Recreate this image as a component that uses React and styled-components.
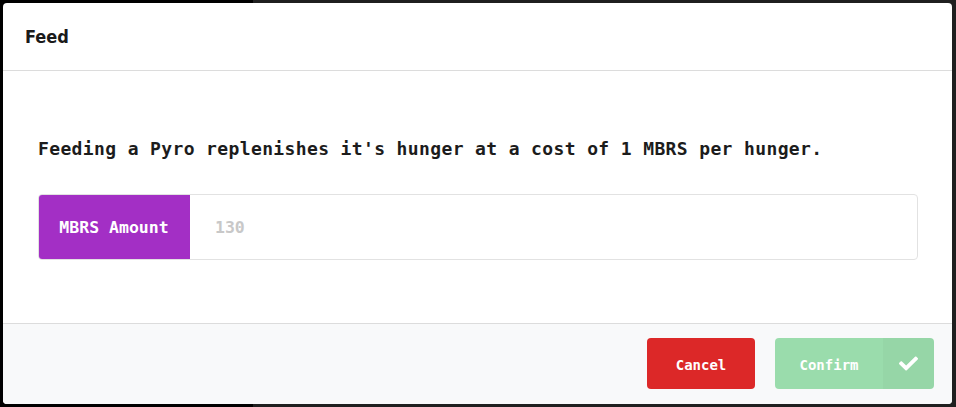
import React from "react";
import styled, { createGlobalStyle } from "styled-components";
import { FaCheck } from "react-icons/fa";

const Global = createGlobalStyle`
  *, *::before, *::after { box-sizing: border-box; }
  html, body { margin: 0; padding: 0; }
  body {
    width: 956px;
    height: 407px;
    overflow: hidden;
    background: linear-gradient(to right, #000 0, #000 253px, #1f1f1f 253px);
    font-family: "DejaVu Sans Mono", monospace;
  }
`;

const Overlay = styled.div`
  padding: 3px 4px 3px 3px;
  height: 407px;
`;

const Modal = styled.div`
  background: #fff;
  border-radius: 4px;
  height: 401px;
  display: flex;
  flex-direction: column;
  overflow: hidden;
`;

const Header = styled.div`
  height: 68px;
  flex: none;
  display: flex;
  align-items: center;
  padding: 0 22px;
  border-bottom: 1px solid #dcdcdc;
  font-family: "DejaVu Sans Condensed", "DejaVu Sans", sans-serif;
  font-weight: bold;
  font-size: 18px;
  color: #1a1a1a;
`;

const Body = styled.div`
  flex: 1;
  padding: 66px 34px 0 35px;
`;

const Message = styled.p`
  margin: 0;
  font-family: "DejaVu Sans Mono", monospace;
  font-weight: bold;
  font-size: 18px;
  letter-spacing: 0.37px;
  line-height: 24px;
  color: #1c1c1c;
`;

const Group = styled.div`
  margin-top: 33px;
  display: flex;
  height: 66px;
  border: 1px solid #e2e2e2;
  border-radius: 4px;
  overflow: hidden;
`;

const Label = styled.div`
  width: 152px;
  margin: -1px 0 -1px -1px;
  background: #a32fc5;
  color: #fff;
  display: flex;
  align-items: center;
  justify-content: center;
  font-weight: bold;
  font-size: 16.5px;
  border-radius: 4px 0 0 4px;
`;

const Input = styled.input`
  flex: 1;
  border: none;
  outline: none;
  padding: 0 25px;
  font-family: "DejaVu Sans Mono", monospace;
  font-weight: bold;
  font-size: 16.5px;
  color: #c8c8c8;
  background: transparent;
`;

const Footer = styled.div`
  height: 81px;
  flex: none;
  border-top: 1px solid #dcdcdc;
  background: #f8f9fa;
  display: flex;
  justify-content: flex-end;
  align-items: flex-start;
  padding: 14px 18px 0 0;
  gap: 20px;
`;

const Button = styled.button`
  height: 51px;
  border: none;
  border-radius: 4px;
  display: flex;
  align-items: stretch;
  padding: 0;
  overflow: hidden;
  color: #fff;
  font-family: "DejaVu Sans Mono", monospace;
  font-weight: bold;
  font-size: 14px;
  background: ${(p) => p.$bg};
  cursor: pointer;
`;

const ButtonText = styled.span`
  width: 108px;
  display: flex;
  align-items: center;
  justify-content: center;
  padding-top: 2px;
`;

const ButtonIcon = styled.span`
  width: 51px;
  display: flex;
  align-items: center;
  justify-content: center;
  background: rgba(0, 0, 0, 0.025);
  font-size: 19px;
`;

export default function App() {
  return (
    <>
      <Global />
      <Overlay>
        <Modal>
          <Header>Feed</Header>
          <Body>
            <Message>
              Feeding a Pyro replenishes it's hunger at a cost of 1 MBRS per hunger.
            </Message>
            <Group>
              <Label>MBRS Amount</Label>
              <Input defaultValue="130" />
            </Group>
          </Body>
          <Footer>
            <Button $bg="#dc2828">
              <ButtonText>Cancel</ButtonText>
            </Button>
            <Button $bg="#9adcac">
              <ButtonText>Confirm</ButtonText>
              <ButtonIcon>
                <FaCheck />
              </ButtonIcon>
            </Button>
          </Footer>
        </Modal>
      </Overlay>
    </>
  );
}
